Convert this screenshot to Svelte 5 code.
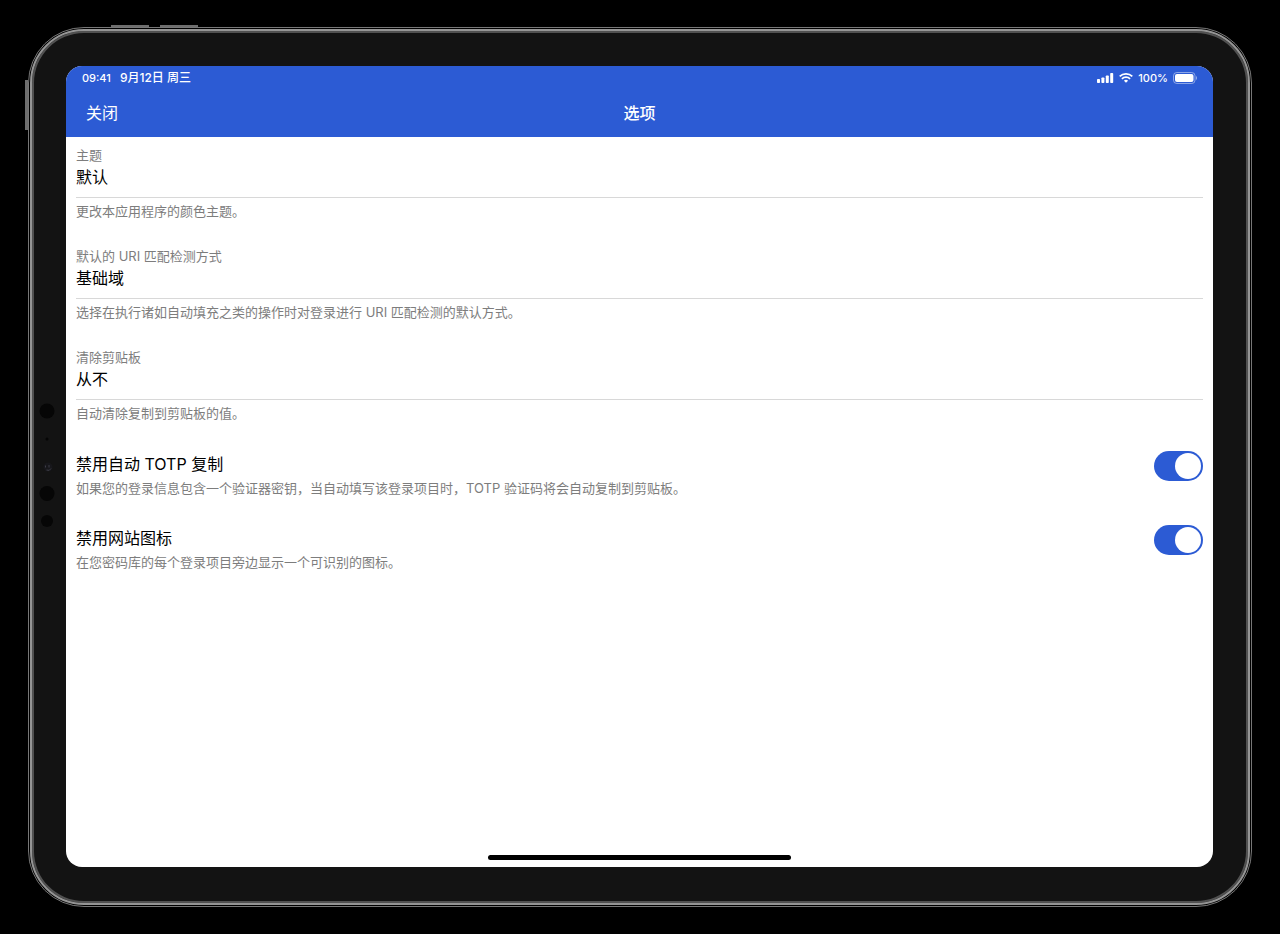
<script>
  let pickers = [
    {
      id: 'theme',
      label: '主题',
      value: '默认',
      choices: ['默认'],
      hint: '更改本应用程序的颜色主题。'
    },
    {
      id: 'uri-match',
      label: '默认的 URI 匹配检测方式',
      value: '基础域',
      choices: ['基础域'],
      hint: '选择在执行诸如自动填充之类的操作时对登录进行 URI 匹配检测的默认方式。'
    },
    {
      id: 'clear-clipboard',
      label: '清除剪贴板',
      value: '从不',
      choices: ['从不'],
      hint: '自动清除复制到剪贴板的值。'
    }
  ];

  let switches = [
    {
      id: 'disable-totp',
      label: '禁用自动 TOTP 复制',
      on: true,
      hint: '如果您的登录信息包含一个验证器密钥，当自动填写该登录项目时，TOTP 验证码将会自动复制到剪贴板。'
    },
    {
      id: 'disable-icons',
      label: '禁用网站图标',
      on: true,
      hint: '在您密码库的每个登录项目旁边显示一个可识别的图标。'
    }
  ];
</script>

<div class="device">
  <span class="key power"></span>
  <span class="key volume-up"></span>
  <span class="key volume-down"></span>

  <div class="shell">
    <svg class="sensors" width="20" height="130" viewBox="0 0 20 130" aria-hidden="true">
      <circle cx="10" cy="11" r="7.5" fill="#060606" />
      <circle cx="10" cy="39" r="1.5" fill="#050505" />
      <circle cx="11" cy="67" r="4.5" fill="#17171b" />
      <path d="M8.5 65.5v2M12 65v2.5M9.5 70q3 1.5 4.5-1.5" stroke="#3d3d47" fill="none" />
      <circle cx="10" cy="93.5" r="7.5" fill="#060606" />
      <circle cx="10" cy="121" r="6" fill="#060606" />
    </svg>

    <div class="screen">
      <header>
        <div class="status">
          <span>09:41</span>
          <span class="date">9月12日 周三</span>
          <svg width="17" height="12" viewBox="0 0 17 12" fill="#fff" aria-hidden="true">
            <rect x="0" y="7" width="3" height="4" rx="0.8" />
            <rect x="4.4" y="5.5" width="3" height="5.5" rx="0.8" />
            <rect x="8.8" y="3.5" width="3" height="7.5" rx="0.8" />
            <rect x="13.2" y="1" width="3" height="10" rx="0.8" />
          </svg>
          <svg width="14" height="12" viewBox="0 0 14 12" fill="none" stroke="#fff" stroke-width="1.7" aria-hidden="true">
            <path d="M0.7 4.4a9 9 0 0 1 12.6 0" />
            <path d="M2.9 6.8a5.8 5.8 0 0 1 8.2 0" />
            <path d="M7 10.8L4.9 8.7a3 3 0 0 1 4.2 0z" fill="#fff" stroke="none" />
          </svg>
          <span>100%</span>
          <svg width="24" height="12" viewBox="0 0 24 12" aria-hidden="true">
            <rect x="0.5" y="0.5" width="21.5" height="11" rx="3.3" fill="none" stroke="#fff" stroke-opacity="0.45" />
            <rect x="2" y="2" width="18.5" height="8" rx="2" fill="#fff" />
            <path d="M23 4v4q1-.6 1-2t-1-2z" fill="#fff" fill-opacity="0.5" />
          </svg>
        </div>
        <nav>
          <button type="button">关闭</button>
          <h1>选项</h1>
        </nav>
      </header>

      <main>
        {#each pickers as picker}
          <div class="field">
            <label for={picker.id}>{picker.label}</label>
            <select id={picker.id} bind:value={picker.value}>
              {#each picker.choices as choice}
                <option>{choice}</option>
              {/each}
            </select>
            <p>{picker.hint}</p>
          </div>
        {/each}

        <div class="switches">
          {#each switches as item}
            <div class="switch">
              <div>
                <label for={item.id}>{item.label}</label>
                <p>{item.hint}</p>
              </div>
              <input id={item.id} type="checkbox" role="switch" bind:checked={item.on} />
            </div>
          {/each}
        </div>
      </main>

      <div class="home-bar"></div>
    </div>
  </div>
</div>

<style>
  :global(body) {
    background: #000;
    font-family: Inter, "Noto Sans CJK SC", sans-serif;
  }

  .device {
    position: relative;
    display: flex;
    box-sizing: border-box;
    min-height: calc(100vh - 54px);
    margin: 27px 28px;
    padding: 1px;
    border: 1px solid #777;
    border-radius: 56px;
  }

  .shell {
    position: relative;
    flex: 1;
    display: flex;
    padding: 35px 35px 36px 34px;
    background: #131313;
    border: 2px solid #959595;
    border-radius: 54px;
    box-shadow: inset 0 0 0 2px #515151;
  }

  .key {
    position: absolute;
    background: #6e6e6e;
  }

  .power {
    left: -4px;
    top: 52px;
    width: 3px;
    height: 50px;
  }

  .volume-up,
  .volume-down {
    top: -3px;
    width: 38px;
    height: 2px;
  }

  .volume-up {
    left: 82px;
  }

  .volume-down {
    left: 131px;
  }

  .sensors {
    position: absolute;
    left: 5px;
    top: 369px;
  }

  .screen {
    flex: 1;
    display: flex;
    flex-direction: column;
    min-width: 0;
    overflow: hidden;
    background: #fff;
    border-radius: 16px;
  }

  header {
    background: #2c5bd4;
    color: #fff;
  }

  .status {
    display: flex;
    align-items: center;
    gap: 5px;
    height: 24px;
    padding: 0 16px;
    font-size: 11px;
    font-weight: 500;
  }

  .date {
    margin-left: 4px;
    margin-right: auto;
    font-size: 12px;
    line-height: 16px;
  }

  nav {
    display: grid;
    grid-template-columns: 1fr auto 1fr;
    align-items: center;
    height: 43px;
    padding: 0 20px 4px;
  }

  nav button {
    justify-self: start;
    padding: 0;
    border: 0;
    background: none;
    color: inherit;
    font: inherit;
    font-size: 16px;
  }

  h1 {
    margin: 0;
    font-size: 16px;
    font-weight: 500;
  }

  main {
    flex: 1;
    padding: 8px 10px;
  }

  .field {
    margin-bottom: 24px;
  }

  .field label {
    display: block;
    color: #7d7d7d;
    font-size: 13px;
    line-height: 20px;
  }

  select {
    display: block;
    box-sizing: border-box;
    width: 100%;
    height: 33px;
    margin: 0 0 2px;
    padding: 0 0 8px;
    appearance: none;
    background: none;
    border: 0;
    border-bottom: 1px solid #d8d8d8;
    border-radius: 0;
    color: #000;
    font: inherit;
    font-size: 16px;
  }

  p {
    margin: 0;
    color: #7d7d7d;
    font-size: 13px;
    line-height: 22px;
  }

  .switches {
    padding-top: 3px;
  }

  .switch {
    display: flex;
    align-items: flex-start;
    justify-content: space-between;
    gap: 16px;
    margin-bottom: 26px;
  }

  .switch label {
    display: block;
    color: #000;
    font-size: 16px;
    line-height: 26px;
  }

  input {
    flex: none;
    display: flex;
    align-items: center;
    box-sizing: border-box;
    width: 49px;
    height: 30px;
    margin: 0;
    padding: 2px;
    appearance: none;
    background: #e5e5ea;
    border-radius: 15px;
  }

  input::before {
    content: "";
    width: 26px;
    height: 26px;
    background: #fff;
    border-radius: 50%;
  }

  input:checked {
    justify-content: flex-end;
    background: #2c5bd4;
  }

  .home-bar {
    align-self: center;
    width: 26.4%;
    min-width: 120px;
    height: 5px;
    margin-bottom: 7px;
    background: #000;
    border-radius: 3px;
  }
</style>
